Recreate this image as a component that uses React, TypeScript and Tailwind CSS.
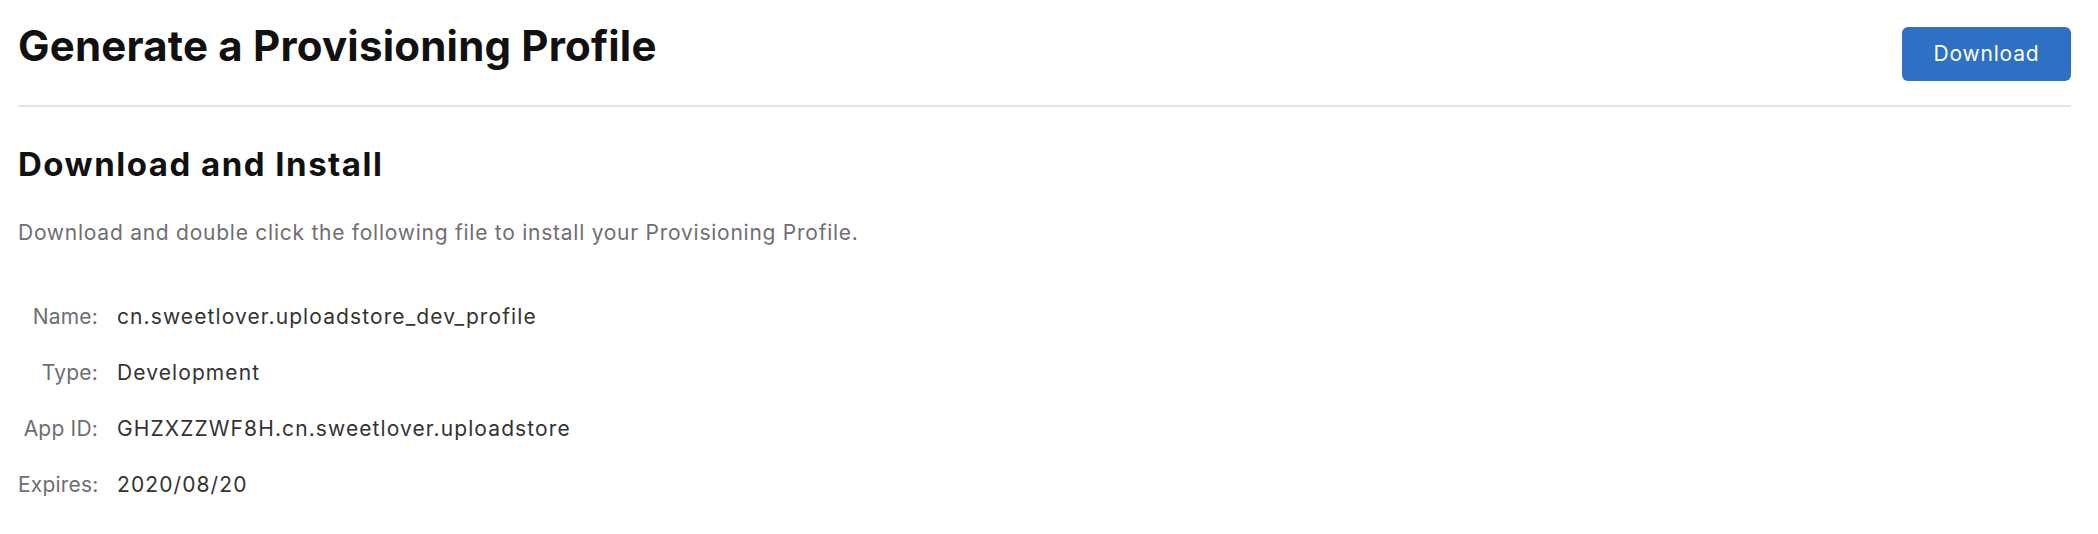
import React from 'react'

const rows = [
  { label: 'Name:', value: 'cn.sweetlover.uploadstore_dev_profile' },
  { label: 'Type:', value: 'Development' },
  { label: 'App ID:', value: 'GHZXZZWF8H.cn.sweetlover.uploadstore' },
  { label: 'Expires:', value: '2020/08/20' },
]

export default function App() {
  return (
    <div
      className="min-h-[534px] w-full bg-white pl-[18px] pr-[27px] text-[#1d1d1f]"
      style={{ fontFamily: 'Inter, "Noto Sans", sans-serif' }}
    >
      {/* Header */}
      <div className="flex items-start justify-between pt-[21px]">
        <h1 className="text-[42px] leading-[50px] font-bold tracking-[0.2px] text-[#111]">
          Generate a Provisioning Profile
        </h1>
        <button className="mt-[6px] h-[54px] w-[169px] rounded-[6px] bg-[#2d70c4] text-[21px] tracking-[0.8px] text-white">
          Download
        </button>
      </div>
      <div className="mt-[24px] h-[2px] bg-[#e4e4e4]" />

      {/* Section */}
      <h2 className="mt-[37px] text-[33px] leading-[40px] font-bold tracking-[1.5px] text-[#111]">
        Download and Install
      </h2>
      <p className="mt-[35px] text-[21px] leading-[28px] tracking-[0.75px] text-[#6e6e73]">
        Download and double click the following file to install your Provisioning Profile.
      </p>

      <div className="mt-[56px] grid grid-cols-[80px_1fr] gap-x-[19px] gap-y-[28px] text-[21px] leading-[28px]">
        {rows.map((r) => (
          <React.Fragment key={r.label}>
            <div className="whitespace-nowrap text-right tracking-[0.2px] text-[#6e6e73]">{r.label}</div>
            <div className="tracking-[1.1px] text-[#333]">{r.value}</div>
          </React.Fragment>
        ))}
      </div>
    </div>
  )
}
